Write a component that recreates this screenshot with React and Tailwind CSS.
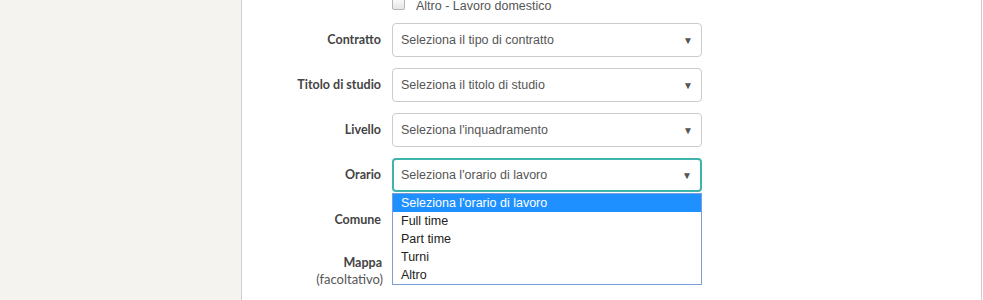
import React from "react";

const Arrow = () => (
  <span className="absolute right-[8px] top-1/2 -translate-y-1/2 text-[10px] leading-none text-[#555]">▼</span>
);

function SelectRow({ label, placeholder, focused, children }) {
  return (
    <div className="flex items-start h-[34px]">
      <div className="w-[140px] shrink-0 pt-[9px] pr-[1px] text-right text-[12.5px] font-bold leading-[16px] text-[#444] font-['Lato',sans-serif]">
        {label}
        {children}
      </div>
      <div
        className={
          "relative ml-[10px] w-[310px] h-[34px] rounded-[4px] bg-white flex items-center " +
          (focused ? "border-2 border-[#3fb4aa] pl-[7px]" : "border border-[#cccccc] pl-[8px]")
        }
      >
        {placeholder ? (
          <span className="text-[12.5px] text-[#555] font-['Liberation_Sans',Arial,sans-serif]">{placeholder}</span>
        ) : null}
        <Arrow />
      </div>
    </div>
  );
}

export default function App() {
  const items = ["Seleziona l'orario di lavoro", "Full time", "Part time", "Turni", "Altro"];
  return (
    <div className="flex w-[983px] h-[300px] overflow-hidden bg-white">
      <div className="w-[242px] shrink-0 h-full bg-[#f4f3ef] border-r border-[#cfcfcf]" />
      <div className="w-[740px] shrink-0 h-full border-r border-[#cccccc] relative">
        <div className="flex flex-col gap-[11px]">
          <div className="flex items-center h-[13px] mt-[-3px] mb-[2px]">
            <div className="w-[140px] shrink-0" />
            <div className="ml-[10px] w-[13px] h-[13px] rounded-[2px] border border-[#b5b5b5] bg-gradient-to-b from-[#fdfdfd] to-[#e6e6e6]" />
            <span className="ml-[11px] mt-[4px] text-[12.5px] leading-[14px] text-[#555] font-['Liberation_Sans',Arial,sans-serif]">
              Altro - Lavoro domestico
            </span>
          </div>
          <SelectRow label="Contratto" placeholder="Seleziona il tipo di contratto" />
          <SelectRow label="Titolo di studio" placeholder="Seleziona il titolo di studio" />
          <SelectRow label="Livello" placeholder="Seleziona l'inquadramento" />
          <SelectRow label="Orario" placeholder="Seleziona l'orario di lavoro" focused />
          <SelectRow label="Comune" placeholder="" />
          <div className="flex items-start">
            <div className="w-[141px] shrink-0 pt-[7px] text-right font-['Lato',sans-serif] leading-[16px]">
              <div className="text-[12.5px] font-bold text-[#444] pr-[1px]">Mappa</div>
              <div className="text-[13px] text-[#555]">(facoltativo)</div>
            </div>
          </div>
        </div>
        <div className="absolute left-[150px] top-[193px] w-[310px] h-[92px] bg-white border border-[#7b9ed6] font-['Liberation_Sans',Arial,sans-serif] text-[12.5px] text-[#222]">
          {items.map((t, i) => (
            <div
              key={t}
              className={"h-[18px] leading-[18px] pl-[8px] " + (i === 0 ? "bg-[#1e90ff] text-white" : "")}
            >
              {t}
            </div>
          ))}
        </div>
      </div>
    </div>
  );
}
